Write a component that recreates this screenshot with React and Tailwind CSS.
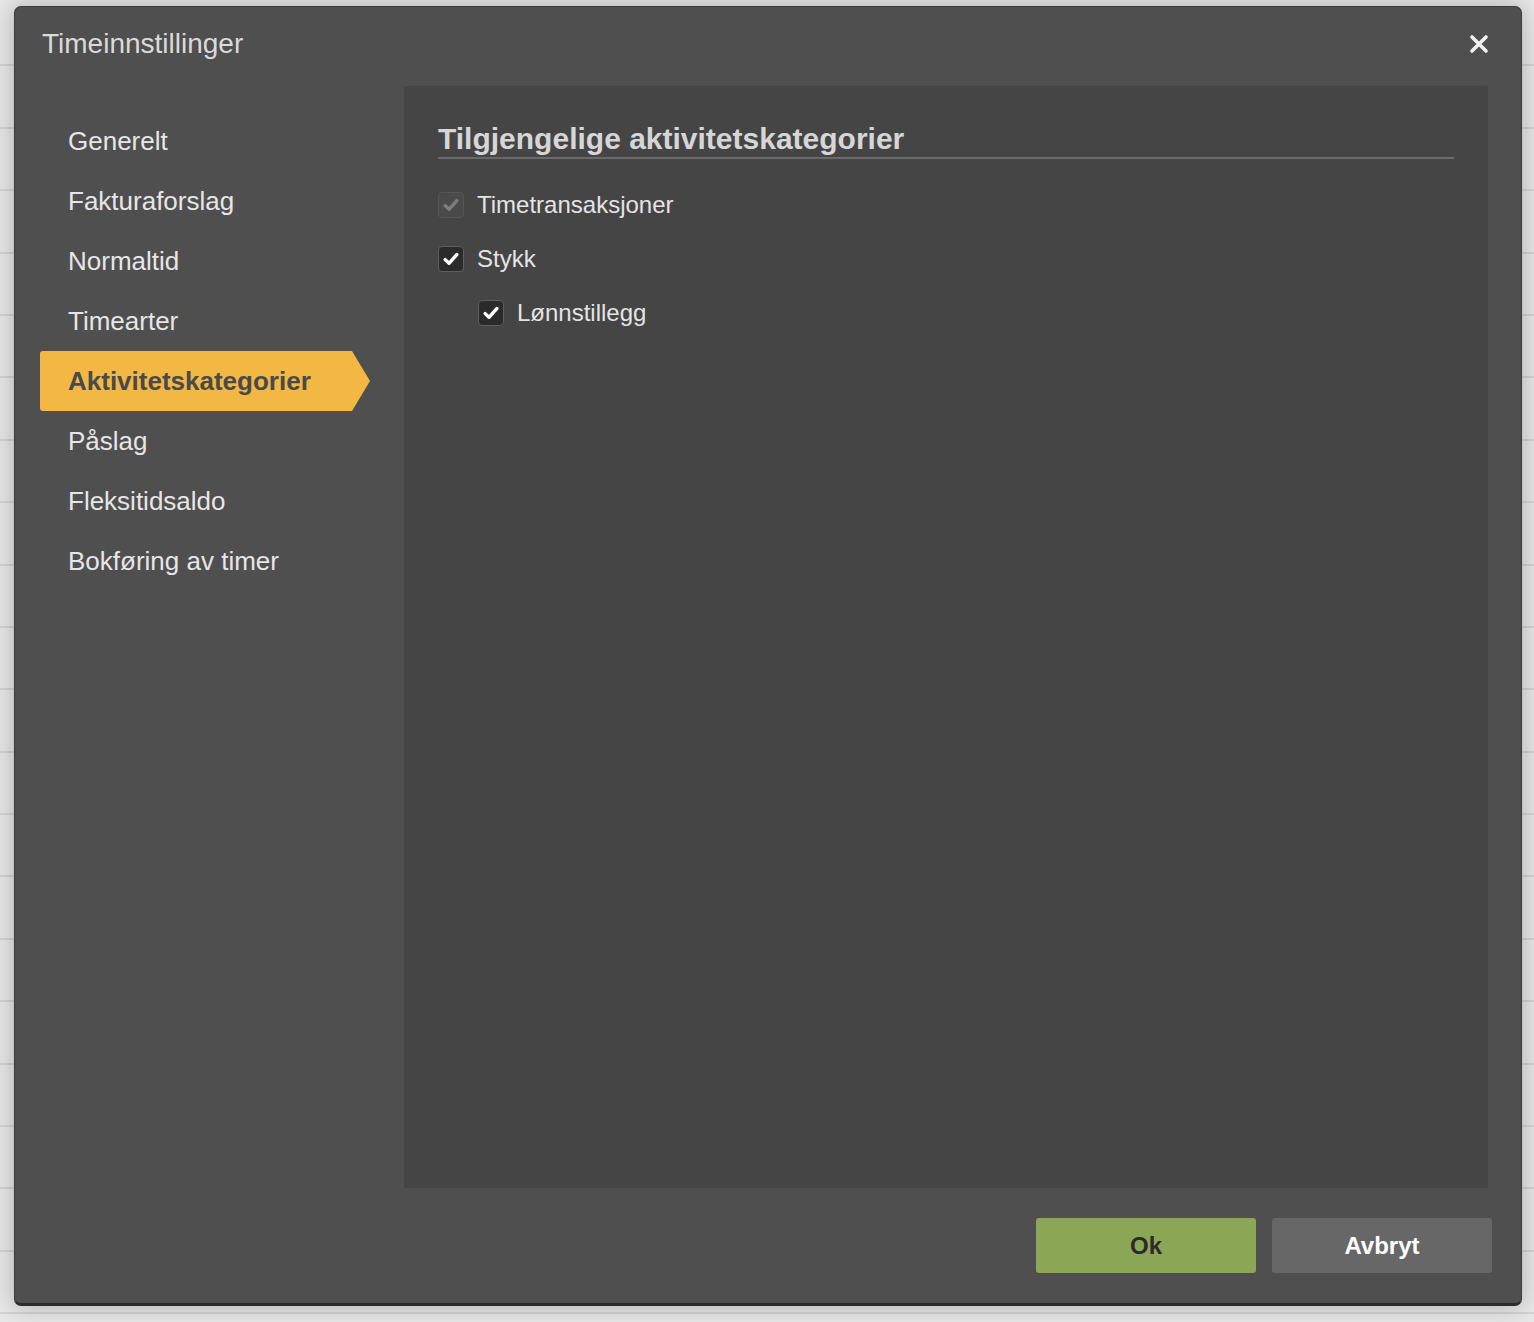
import React, { useState } from 'react';

const menuItems = [
  'Generelt',
  'Fakturaforslag',
  'Normaltid',
  'Timearter',
  'Aktivitetskategorier',
  'Påslag',
  'Fleksitidsaldo',
  'Bokføring av timer',
];

const CheckMark = ({ color }) => (
  <svg width="16" height="14" viewBox="0 0 16 14" fill="none">
    <path d="M2.2 7.6 L6 11.3 L13.8 2.6" stroke={color} strokeWidth="3.4" strokeLinecap="round" strokeLinejoin="round" />
  </svg>
);

const CheckRow = ({ label, checked, disabled, indent }) => (
  <div className={`flex h-[54px] items-center gap-[13px] ${indent ? 'pl-[40px]' : ''}`}>
    <div
      className={`flex h-[26px] w-[26px] items-center justify-center rounded-[4px] border ${
        disabled ? 'border-[#555555] bg-[#4a4a4a]' : 'border-[#5e5e5e] bg-[#2b2b2b]'
      }`}
    >
      {checked && <CheckMark color={disabled ? '#7d7d7d' : '#ffffff'} />}
    </div>
    <span className="text-[24px] text-[#e4e4e4]">{label}</span>
  </div>
);

const App = () => {
  const [active, setActive] = useState('Aktivitetskategorier');

  return (
    <div className="relative h-[1322px] w-full overflow-hidden bg-[#e7e7e7] font-['Liberation_Sans',Arial,sans-serif]">
      {/* page behind the modal */}
      <div className="pt-[4px]">
        {Array.from({ length: 21 }).map((_, i) => (
          <div key={i} className="h-[62.4px] border-b-2 border-[#d3d3d3]" />
        ))}
      </div>

      {/* modal */}
      <div className="absolute left-[14px] top-[6px] flex h-[1300px] w-[1508px] flex-col rounded-[7px] border border-[#3c3c3c] border-b-[3px] border-b-[#2c2c2c] bg-[#4f4f4f] shadow-[0_0_24px_rgba(0,0,0,0.25)]">
        <div className="flex h-[79px] items-start justify-between pl-[27px] pr-[31px] pt-[21px]">
          <h1 className="text-[28px] leading-[32px] text-[#dadada]">Timeinnstillinger</h1>
          <button className="mt-[5px] flex h-[22px] w-[22px] items-center justify-center">
            <svg width="20" height="20" viewBox="0 0 20 20">
              <path d="M3 3 L17 17 M17 3 L3 17" stroke="#f0f0f0" strokeWidth="3.6" strokeLinecap="round" />
            </svg>
          </button>
        </div>

        <div className="flex flex-1 pl-[25px] pr-[33px]">
          <nav className="w-[330px] pt-[25px]">
            {menuItems.map((item) =>
              item === active ? (
                <div
                  key={item}
                  onClick={() => setActive(item)}
                  className="flex h-[60px] cursor-pointer items-center rounded-l-[3px] bg-[#f3b843] pl-[28px] text-[26px] font-bold text-[#4a4a4a] [clip-path:polygon(0_0,calc(100%-18px)_0,100%_50%,calc(100%-18px)_100%,0_100%)]"
                >
                  {item}
                </div>
              ) : (
                <div
                  key={item}
                  onClick={() => setActive(item)}
                  className="flex h-[60px] cursor-pointer items-center pl-[28px] text-[26px] leading-[30px] text-[#e6e6e6]"
                >
                  <span className="-mt-[1px]">{item}</span>
                </div>
              )
            )}
          </nav>

          <div className="ml-[34px] flex-1 rounded-[3px] bg-[#454545] px-[34px] pt-[35px]">
            <h2 className="border-b-2 border-[#6a6a6a] text-[30px] font-bold leading-[36px] text-[#d6d6d6]">
              Tilgjengelige aktivitetskategorier
            </h2>
            <div className="mt-[19px]">
              <CheckRow label="Timetransaksjoner" checked disabled />
              <CheckRow label="Stykk" checked />
              <CheckRow label="Lønnstillegg" checked indent />
            </div>
          </div>
        </div>

        <div className="flex h-[115px] justify-end gap-[16px] pr-[29px] pt-[30px]">
          <button className="h-[55px] w-[220px] rounded-[3px] bg-[#8ba756] text-[24px] font-bold text-[#2a2a2a]">
            Ok
          </button>
          <button className="h-[55px] w-[220px] rounded-[3px] bg-[#676767] text-[24px] font-bold text-white">
            Avbryt
          </button>
        </div>
      </div>
    </div>
  );
};

export default App;
